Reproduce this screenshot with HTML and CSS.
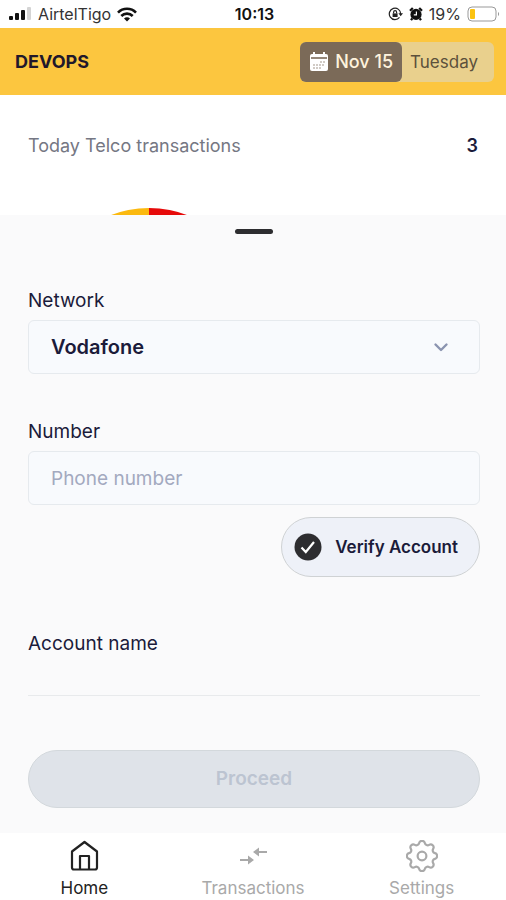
FILE: index.html
```html
<!DOCTYPE html>
<html lang="en">
<head>
  <meta charset="UTF-8">
  <meta name="viewport" content="width=device-width, initial-scale=1">
  <title>Devops</title>
  <link rel="stylesheet" href="styles.css">
</head>
<body>
  <div class="status-bar">
    <div class="status-left">
      <svg width="23" height="14" viewBox="0 0 23 14">
        <rect x="0" y="9" width="4" height="4" rx="1" fill="#111"/>
        <rect x="6" y="6" width="4" height="7" rx="1" fill="#111"/>
        <rect x="12" y="3" width="4" height="10" rx="1" fill="#111"/>
        <rect x="18" y="0" width="4" height="13" rx="1" fill="#d4d4d4"/>
      </svg>
      <span>AirtelTigo</span>
      <svg width="20" height="15" viewBox="0 0 20 15" fill="none" stroke="#111" stroke-width="2.6">
        <path d="M1 5.6a12.6 12.6 0 0 1 18 0"/>
        <path d="M4.3 9a8 8 0 0 1 11.4 0"/>
        <path d="M10 14.5l-3-3a4.2 4.2 0 0 1 6 0z" fill="#111" stroke="none"/>
      </svg>
    </div>
    <strong class="status-time">10:13</strong>
    <div class="status-right">
      <svg width="15" height="14" viewBox="0 0 15 14" fill="none" stroke="#222" stroke-width="1.2">
        <path d="M11.5 10.4A5.7 5.7 0 1 1 12.7 7"/>
        <path d="M10.4 6.2h4.6l-2.3 3z" fill="#222" stroke="none"/>
        <rect x="4.6" y="6.4" width="5" height="3.6" fill="#222" stroke="none"/>
        <path d="M5.6 6.4V5.2a1.5 1.5 0 0 1 3 0v1.2"/>
      </svg>
      <svg width="14" height="14" viewBox="0 0 14 14">
        <circle cx="7" cy="7.4" r="5.6" fill="#111"/>
        <path d="M1 3.8L3.8 1M13 3.8L10.2 1M3.2 11.5l-1.2 1.7M10.8 11.5l1.2 1.7" stroke="#111" stroke-width="2.2"/>
        <path d="M7.4 4.4v3.4H4.8" fill="none" stroke="#fff" stroke-width="1.2"/>
      </svg>
      <span>19%</span>
      <svg width="33" height="16" viewBox="0 0 33 16">
        <rect x="1" y="1" width="28" height="14" rx="4" fill="#fff" stroke="#999"/>
        <rect x="3" y="3" width="5" height="10" rx="1" fill="#fbc311"/>
        <path d="M31 6a2.4 2.4 0 0 1 0 4z" fill="#999"/>
      </svg>
    </div>
  </div>

  <header class="header">
    <h1>DEVOPS</h1>
    <div class="date">
      <button type="button" class="date-btn">
        <svg width="20" height="20" viewBox="0 0 20 20">
          <rect x="1" y="2" width="18" height="17" rx="2" fill="#fff"/>
          <path d="M5 0v3M15 0v3" stroke="#fff" stroke-width="2"/>
          <path d="M2 6h16" stroke="#7b6a58" stroke-width="1.6"/>
          <path d="M11 10h5M4 13h12M4 16h9" stroke="#a3978b" stroke-width="1.2" stroke-dasharray="2 1"/>
        </svg>
        Nov 15
      </button>
      <span class="day">Tuesday</span>
    </div>
  </header>

  <section class="summary">
    <div class="summary-row">
      <span>Today Telco transactions</span>
      <strong>3</strong>
    </div>
    <svg class="chart" width="242" height="8" viewBox="0 0 242 8">
      <path d="M121 0a106 106 0 0 0-106 106h106z" fill="#fbb90f"/>
      <path d="M121 0a106 106 0 0 1 106 106H121z" fill="#e60a0a"/>
    </svg>
  </section>

  <form class="sheet">
    <div class="handle"></div>

    <label for="network">Network</label>
    <div class="select-wrap">
      <select id="network" class="field">
        <option>Vodafone</option>
        <option>MTN</option>
        <option>AirtelTigo</option>
      </select>
      <svg class="chevron" width="16" height="16" viewBox="0 0 16 16" fill="none" stroke="#8b94b0" stroke-width="2.4" stroke-linecap="round" stroke-linejoin="round">
        <path d="M2.5 5.5L8 11l5.5-5.5"/>
      </svg>
    </div>

    <label for="number">Number</label>
    <input type="tel" id="number" class="field" placeholder="Phone number">

    <button type="button" class="verify">
      <svg width="28" height="28" viewBox="0 0 28 28" fill="none">
        <circle cx="14" cy="14" r="13.5" fill="#2d2d30"/>
        <path d="M7.5 14.5l4.3 4.5 8.2-10" stroke="#fff" stroke-width="2.2"/>
      </svg>
      Verify Account
    </button>

    <label for="account">Account name</label>
    <input type="text" id="account" class="account" readonly>

    <button type="submit" class="proceed" disabled>Proceed</button>
  </form>

  <nav class="tabs">
    <a href="#home" class="active">
      <svg width="32" height="32" viewBox="0 0 32 32" fill="none" stroke="currentColor" stroke-width="2.2" stroke-linejoin="round">
        <path d="M4 11.5L16.5 2 29 11.5v16a2 2 0 0 1-2 2H6a2 2 0 0 1-2-2z"/>
        <path d="M12 29.5V16h9v13.5"/>
      </svg>
      Home
    </a>
    <a href="#transactions">
      <svg width="32" height="32" viewBox="0 0 32 32" fill="none" stroke="currentColor" stroke-width="2">
        <path d="M3 20h10M30 12H20"/>
        <path d="M11 15.5l6 4.5-6 4.5zM22 7.5L16 12l6 4.5z" fill="currentColor" stroke="none"/>
      </svg>
      Transactions
    </a>
    <a href="#settings">
      <svg width="32" height="32" viewBox="2.5 2.5 19 19" fill="none" stroke="currentColor" stroke-width="1.3">
        <path d="M10.325 4.317c.426-1.756 2.924-1.756 3.35 0a1.724 1.724 0 002.573 1.066c1.543-.94 3.31.826 2.37 2.37a1.724 1.724 0 001.065 2.572c1.756.426 1.756 2.924 0 3.35a1.724 1.724 0 00-1.066 2.573c.94 1.543-.826 3.31-2.37 2.37a1.724 1.724 0 00-2.572 1.065c-.426 1.756-2.924 1.756-3.35 0a1.724 1.724 0 00-2.573-1.066c-1.543.94-3.31-.826-2.37-2.37a1.724 1.724 0 00-1.065-2.572c-1.756-.426-1.756-2.924 0-3.35a1.724 1.724 0 001.066-2.573c-.94-1.543.826-3.31 2.37-2.37.996.608 2.296.07 2.572-1.065z"/>
        <circle cx="12" cy="12" r="2.6"/>
      </svg>
      Settings
    </a>
  </nav>
</body>
</html>
```

FILE: styles.css
```css
* {
  box-sizing: border-box;
}
body {
  margin: 0;
  min-height: 100vh;
  display: flex;
  flex-direction: column;
  background: #fff;
  color: #1b1b3a;
  font-family: Inter, sans-serif;
  font-size: 18px;
  line-height: 24px;
}
svg {
  display: block;
  flex: none;
}
button, input, select {
  font: inherit;
  color: inherit;
}
.status-bar {
  display: grid;
  grid-template-columns: 1fr auto 1fr;
  align-items: center;
  height: 28px;
  padding: 0 6px 0 9px;
  color: #333;
  font-size: 16px;
}
.status-left, .status-right {
  display: flex;
  align-items: center;
  gap: 6px;
}
.status-right {
  justify-content: flex-end;
}
.status-time {
  color: #111;
  font-weight: 600;
}
.header {
  display: flex;
  align-items: center;
  justify-content: space-between;
  height: 67px;
  padding: 0 12px 0 15px;
  background: #fcc63f;
}
.header h1 {
  margin: 0;
  font-size: 18px;
  font-weight: 700;
  color: #21182b;
}
.date {
  display: flex;
  height: 40px;
  border-radius: 6px;
  background: #e9d08d;
}
.date-btn {
  display: flex;
  align-items: center;
  gap: 6px;
  padding: 0 9px;
  border: none;
  border-radius: 6px;
  background: #7b6a58;
  color: #fff3dd;
  font-weight: 500;
}
.day {
  padding: 8px 16px 8px 8px;
  color: #5c503c;
  font-size: 17px;
}
.summary {
  height: 120px;
  padding: 39px 28px 0;
  overflow: hidden;
}
.summary-row {
  display: flex;
  justify-content: space-between;
  color: #757783;
}
.summary-row strong {
  font-weight: 600;
  color: #1b1b3a;
}
.chart {
  margin-top: 50px;
}
.sheet {
  flex: 1;
  display: flex;
  flex-direction: column;
  padding: 14px 26px 25px 28px;
  background: #fafafb;
}
.handle {
  align-self: center;
  width: 38px;
  height: 5px;
  margin-bottom: 55px;
  border-radius: 3px;
  background: #2d2d30;
}
.sheet label {
  margin-bottom: 7px;
  font-size: 19px;
}
.field {
  width: 100%;
  height: 54px;
  padding: 0 22px;
  border: 1px solid #e6eaee;
  border-radius: 6px;
  background: #f8fafd;
  font-size: 19px;
}
.field::placeholder {
  color: #a3a9bf;
  opacity: 1;
}
.select-wrap {
  position: relative;
  margin-bottom: 46px;
}
.select-wrap .field {
  display: block;
  appearance: none;
  font-size: 20px;
  font-weight: 600;
}
.chevron {
  position: absolute;
  top: 19px;
  right: 31px;
  pointer-events: none;
}
.verify {
  align-self: flex-end;
  display: flex;
  align-items: center;
  gap: 13px;
  height: 60px;
  margin: 12px 0 55px;
  padding: 0 21px 0 12px;
  border: 1px solid #cfd2d4;
  border-radius: 30px;
  background: #eef1f8;
  font-size: 17px;
  font-weight: 600;
}
.account {
  height: 33px;
  padding: 0;
  border: none;
  border-bottom: 1px solid #e8eaec;
  border-radius: 0;
  background: none;
}
.proceed {
  height: 58px;
  margin-top: 54px;
  border: 1px solid #d3d8dc;
  border-radius: 29px;
  background: #dfe3e9;
  color: #bcc4d1;
  font-size: 19px;
  font-weight: 600;
}
.tabs {
  display: grid;
  grid-template-columns: repeat(3, 1fr);
  height: 67px;
  padding-top: 7px;
}
.tabs a {
  display: flex;
  flex-direction: column;
  align-items: center;
  gap: 4px;
  color: #a9a9a9;
  font-size: 17px;
  text-decoration: none;
}
.tabs .active {
  color: #222;
}
```
